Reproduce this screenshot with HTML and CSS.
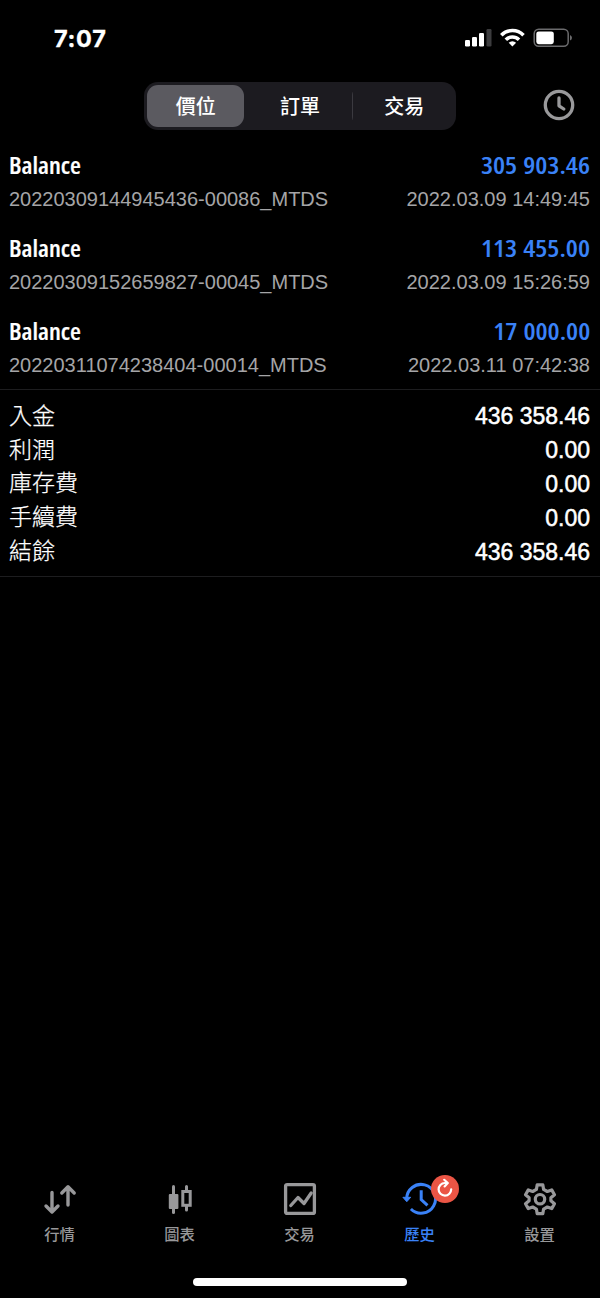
FILE: index.html
```html
<!DOCTYPE html>
<html lang="zh-Hant">
<head>
  <meta charset="UTF-8" />
  <meta name="viewport" content="width=device-width, initial-scale=1.0" />
  <title>歷史</title>
  <link rel="stylesheet" href="styles.css">
</head>
<body>
  <div class="status-bar">
    <span class="time">7:07</span>
    <svg class="status-icons" width="108" height="24" viewBox="0 0 108 24">
      <g fill="#fff">
        <rect x="0" y="14" width="5" height="6.5" rx="1.2" />
        <rect x="7" y="11" width="5" height="9.5" rx="1.2" />
        <rect x="14" y="7" width="5" height="13.5" rx="1.2" />
        <rect x="21.5" y="3" width="5" height="17.5" rx="1.2" fill="#3c3c3e" />
      </g>
      <g fill="none" stroke="#fff" stroke-width="3.6">
        <path d="M36.3 9.2a15.6 15.6 0 0 1 22.2 0" />
        <path d="M40.8 13.7a9.4 9.4 0 0 1 13.2 0" />
      </g>
      <path d="M47.4 20.5l-3.7-3.8a5.3 5.3 0 0 1 7.4 0z" fill="#fff" />
      <rect x="69.2" y="3.2" width="34" height="17" rx="4.5" fill="none" stroke="#6b6b6d" stroke-width="1.5" />
      <rect x="71.3" y="5.4" width="17.5" height="12.8" rx="2.4" fill="#fff" />
      <path d="M105 9v5.6q2-.9 2-2.8t-2-2.8z" fill="#6b6b6d" />
    </svg>
  </div>

  <div class="toolbar">
    <div class="segmented">
      <button class="segment active">價位</button>
      <button class="segment">訂單</button>
      <button class="segment divided">交易</button>
    </div>
    <svg class="clock" width="32" height="32" viewBox="0 0 32 32" fill="none" stroke="#99999b" stroke-width="3.3" stroke-linecap="round" stroke-linejoin="round">
      <circle cx="16" cy="16" r="13.7" />
      <path d="M16 9v7.8l4.8 3.2" />
    </svg>
  </div>

  <div class="deals">
    <div class="deal">
      <div class="deal-main"><span class="deal-type">Balance</span><span class="deal-amount">305 903.46</span></div>
      <div class="deal-info"><span>20220309144945436-00086_MTDS</span><span>2022.03.09 14:49:45</span></div>
    </div>
    <div class="deal">
      <div class="deal-main"><span class="deal-type">Balance</span><span class="deal-amount">113 455.00</span></div>
      <div class="deal-info"><span>20220309152659827-00045_MTDS</span><span>2022.03.09 15:26:59</span></div>
    </div>
    <div class="deal">
      <div class="deal-main"><span class="deal-type">Balance</span><span class="deal-amount">17 000.00</span></div>
      <div class="deal-info"><span>20220311074238404-00014_MTDS</span><span>2022.03.11 07:42:38</span></div>
    </div>
  </div>

  <div class="summary">
    <div class="summary-row"><span>入金</span><span class="sum">436 358.46</span></div>
    <div class="summary-row"><span>利潤</span><span class="sum">0.00</span></div>
    <div class="summary-row"><span>庫存費</span><span class="sum">0.00</span></div>
    <div class="summary-row"><span>手續費</span><span class="sum">0.00</span></div>
    <div class="summary-row"><span>結餘</span><span class="sum">436 358.46</span></div>
  </div>

  <div class="tab-bar">
    <div class="tab">
      <svg width="36" height="36" viewBox="0 0 36 36" fill="none" stroke="currentColor" stroke-width="3.4" stroke-linecap="round" stroke-linejoin="round">
        <path d="M10 11.5v19M4 25l6 6 6-6" />
        <path d="M26 24V6M19.8 12L26 5.8l6.2 6.2" />
      </svg>
      <span>行情</span>
    </div>
    <div class="tab">
      <svg width="36" height="36" viewBox="0 0 36 36" fill="none" stroke="currentColor" stroke-width="3" stroke-linecap="round">
        <path d="M11.5 5.5v26" />
        <rect x="6.8" y="13" width="9.6" height="15" rx="1" fill="currentColor" stroke="none" />
        <path d="M24.5 5.5v4M24.5 25v4" />
        <rect x="20.8" y="10.5" width="7.4" height="13.8" />
      </svg>
      <span>圖表</span>
    </div>
    <div class="tab">
      <svg width="36" height="36" viewBox="0 0 36 36" fill="none" stroke="currentColor" stroke-width="3.3" stroke-linecap="round" stroke-linejoin="round">
        <rect x="3.6" y="3.6" width="28.8" height="28.8" rx="1.5" />
        <path d="M8.8 24.5l7.2-8 6 6L29.2 12" />
      </svg>
      <span>交易</span>
    </div>
    <div class="tab current">
      <svg width="36" height="36" viewBox="0 0 36 36" fill="none" stroke="currentColor" stroke-width="3">
        <path d="M4.7 18a14.4 14.4 0 1 1 4.2 10" />
        <path d="M.9 16.3h7.8l-3.9 4.4z" fill="currentColor" stroke-width="1" stroke-linejoin="round" />
        <path d="M19.2 9.3v9.2l6.3 5.8" />
      </svg>
      <span>歷史</span>
      <div class="badge">
        <svg width="28" height="28" viewBox="0 0 28 28" fill="none" stroke="#fff" stroke-width="2.2" stroke-linecap="round" stroke-linejoin="round">
          <path d="M20.2 14.3A6.3 6.3 0 1 1 13.8 8h2.4" />
          <path d="M13.2 4.8L16.8 8l-3.2 3.4" />
        </svg>
      </div>
    </div>
    <div class="tab">
      <svg width="36" height="36" viewBox="0 0 36 36" fill="none" stroke="currentColor" stroke-width="3.2" stroke-linejoin="round">
        <path d="M15.2 3.8h5.6l.8 4.6 3.7 2.1 4.4-1.6 2.8 4.8-3.6 3v3.1l3.6 3-2.8 4.8-4.4-1.6-3.7 2.1-.8 4.6h-5.6l-.8-4.6-3.7-2.1-4.4 1.6-2.8-4.8 3.6-3v-3.1l-3.6-3 2.8-4.8 4.4 1.6 3.7-2.1z" />
        <circle cx="18" cy="18.2" r="4.7" />
      </svg>
      <span>設置</span>
    </div>
  </div>
  <div class="home-indicator"></div>
</body>
</html>
```
FILE: styles.css
```css
* { box-sizing: border-box; }
body {
  margin: 0; height: 1298px;
  background: #000; color: #fff;
  font-family: "Liberation Sans", "Noto Sans CJK TC", sans-serif;
  display: flex; flex-direction: column;
}
.status-bar {
  height: 76px; padding: 0 27px 0 54px;
  display: flex; justify-content: space-between; align-items: center;
}
.time {
  margin-top: 2px;
  font: 700 23.5px/30px "Inter", sans-serif;
  letter-spacing: 0.7px;
  -webkit-text-stroke: 0.3px #fff;
}
.status-icons { display: block; margin-top: -1px; }

.toolbar {
  height: 64px; padding: 6px 25px 0 144px;
  display: flex; justify-content: space-between; align-items: flex-start;
}
.segmented {
  width: 312px; height: 48px; padding: 3px;
  display: flex; gap: 7px;
  background: #1c1b20; border-radius: 14px;
}
.segment {
  flex: 1; padding: 0; border: none; border-radius: 11px;
  background: none; color: #fff;
  font: 500 20px/26px "Noto Sans CJK TC", sans-serif;
}
.segment.active { background: #5b5a60; }
.segment.divided {
  margin-left: -4px; padding-left: 4px;
  background: linear-gradient(#3b3a40, #3b3a40) no-repeat 0 center / 1px 28px;
}
.clock { display: block; margin-top: 7px; }

.deals { height: 250px; border-bottom: 1px solid #1d1d1f; }
.deal { height: 83px; padding: 10px 10px 0 9px; }
.deal-main, .deal-info, .summary-row {
  display: flex; justify-content: space-between; align-items: center;
}
.deal-main {
  height: 30px;
  font: 600 24px/30px "Open Sans", sans-serif;
  font-stretch: 75%;
}
.deal-type {
  -webkit-text-stroke: 0.2px #fff;
  transform: scaleX(1.04); transform-origin: left;
}
.deal-amount {
  color: #3a82f7; word-spacing: 1px;
  transform: scaleX(1.125); transform-origin: right;
}
.deal-info { height: 24px; margin-top: 7px; font-size: 20px; color: #a5a5a7; }

.summary { height: 187px; padding: 9px 10px 0 9px; border-bottom: 1px solid #1d1d1f; }
.summary-row {
  height: 33.8px;
  font: 300 23px/33px "Noto Sans CJK TC", sans-serif;
  -webkit-text-stroke: 0.25px #fff;
}
.summary-row span { margin-top: -3px; }
.summary-row .sum {
  margin-top: 2px;
  font: 400 23px/33px "Liberation Sans", sans-serif;
  -webkit-text-stroke: 0.5px #fff;
}

.tab-bar { display: flex; height: 98px; margin-top: auto; padding-top: 2px; }
.tab {
  position: relative; flex: 1;
  display: flex; flex-direction: column; align-items: center;
  color: #98989a;
}
.tab svg { display: block; }
.tab span { margin: 5px 1px 0 0; font: 500 15.3px/22px "Noto Sans CJK TC", sans-serif; }
.tab.current { color: #3a82f7; }
.badge {
  position: absolute; top: -6px; left: 71px;
  width: 28px; height: 28px; border-radius: 50%;
  background: #eb5545;
}
.home-indicator {
  width: 214px; height: 8px; margin: 1px auto 12px;
  background: #fff; border-radius: 4px;
}
```
